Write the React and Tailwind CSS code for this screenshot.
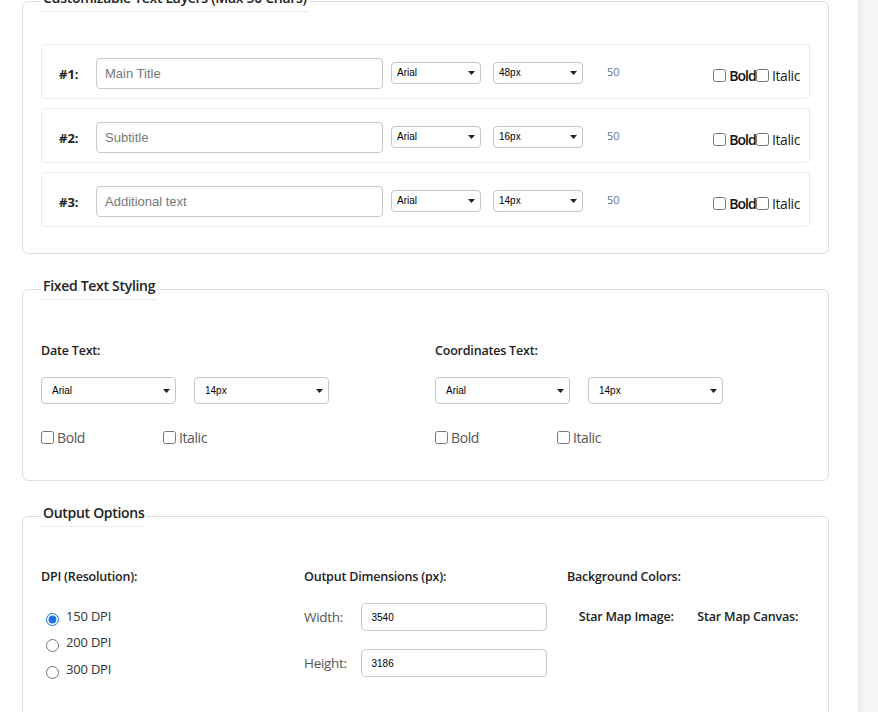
import React from "react";

const arial = "font-['Liberation_Sans',Arial,sans-serif]";

function Select({ value, w, h, pl, className = "" }) {
  return (
    <div className={`relative shrink-0 ${className}`}>
      <select
        defaultValue={value}
        className={`${w} ${h} ${pl} ${arial} appearance-none block border border-[#c6c6c6] rounded-[4px] bg-white text-[10px] text-black outline-none`}
      >
        <option>{value}</option>
      </select>
      <svg
        className="absolute right-[6px] top-1/2 -translate-y-1/2 pointer-events-none"
        width="7"
        height="4"
        viewBox="0 0 7 4"
      >
        <path d="M0 0H7L3.5 4Z" fill="#222" />
      </svg>
    </div>
  );
}

function Check({ label, labelClass = "", boxClass = "" }) {
  return (
    <label className="flex items-center shrink-0">
      <input type="checkbox" className={`w-[13px] h-[13px] m-0 ${boxClass}`} />
      <span className={`ml-[3px] ${labelClass}`}>{label}</span>
    </label>
  );
}

function Fieldset({ title, children, className = "" }) {
  return (
    <fieldset
      className={`ml-[22px] w-[807px] border border-[#dddddd] rounded-[6px] px-[18px] ${className}`}
    >
      <legend className="px-[2px] pb-[5px] border-b border-[#ececec] text-[14px] font-semibold leading-[16px] text-[#222] tracking-[-0.3px]">
        {title}
      </legend>
      {children}
    </fieldset>
  );
}

function LayerRow({ n, placeholder, size }) {
  return (
    <div className="flex items-center h-[55px] border border-[#ececec] rounded-[4px] pl-[17px] pr-[9px]">
      <div className="w-[37px] shrink-0 mt-[7px] text-[13px] font-bold text-[#222]">#{n}:</div>
      <input
        placeholder={placeholder}
        className={`${arial} mt-[3px] shrink-0 w-[287px] h-[31px] border border-[#c9c9c9] rounded-[4px] px-[8px] text-[13px] text-[#222] placeholder:text-[#777] outline-none`}
      />
      <Select value="Arial" w="w-[90px]" h="h-[22px]" pl="pl-[5px]" className="ml-[8px] mt-[2px]" />
      <Select value={size} w="w-[90px]" h="h-[22px]" pl="pl-[5px]" className="ml-[12px] mt-[2px]" />
      <div className="ml-[24px] mt-[1px] text-[11px] text-[#62779a]">50</div>
      <div className="ml-auto mt-[7px] flex items-center text-[14px] tracking-[-0.4px]">
        <Check label="Bold" labelClass="font-semibold tracking-[-0.9px] text-[#111]" />
        <Check label="Italic" labelClass="text-[#222] ml-[3px]" />
      </div>
    </div>
  );
}

function FixedCol({ title }) {
  return (
    <div className="flex flex-col">
      <div className="text-[12.5px] font-semibold leading-[18px] text-[#222] tracking-[-0.2px]">{title}</div>
      <div className="flex gap-[18px] mt-[17px]">
        <Select value="Arial" w="w-[135px]" h="h-[27px]" pl="pl-[10px]" />
        <Select value="14px" w="w-[135px]" h="h-[27px]" pl="pl-[10px]" />
      </div>
      <div className="flex items-center h-[20px] mt-[23px] text-[14px] text-[#555] tracking-[-0.4px]">
        <div className="w-[122px]">
          <Check label="Bold" />
        </div>
        <Check label="Italic" />
      </div>
    </div>
  );
}

function Radio({ label, checked }) {
  return (
    <label className="flex items-center h-[26.5px]">
      <input
        type="radio"
        name="dpi"
        defaultChecked={checked}
        className="w-[13px] h-[13px] m-0 ml-[5px] mt-[6px] accent-[#1a73e8]"
      />
      <span className="ml-[7px] text-[13px] text-[#333] tracking-[-0.2px]">{label}</span>
    </label>
  );
}

function DimRow({ label, value }) {
  return (
    <div className="flex items-center">
      <div className="w-[58px] text-[13.5px] text-[#555] tracking-[-0.3px]">{label}</div>
      <input
        defaultValue={value}
        className={`${arial} w-[187px] h-[28px] border border-[#c9c9c9] rounded-[4px] px-[9px] text-[10px] text-black outline-none`}
      />
    </div>
  );
}

const head = "text-[12.5px] font-semibold leading-[18px] text-[#222] tracking-[-0.2px]";

export default function App() {
  return (
    <div className="h-[712px] overflow-hidden bg-white flex font-['Open_Sans',sans-serif] text-[#333]">
      <div className="w-[858px] shrink-0">
        <div className="-mt-[10px]">
          <Fieldset title="Customizable Text Layers (Max 50 Chars)" className="pb-[26px] mb-[24px]">
            <div className="pt-[32px] flex flex-col gap-[9px]">
              <LayerRow n={1} placeholder="Main Title" size="48px" />
              <LayerRow n={2} placeholder="Subtitle" size="16px" />
              <LayerRow n={3} placeholder="Additional text" size="14px" />
            </div>
          </Fieldset>

          <Fieldset title="Fixed Text Styling" className="pb-[33px] mb-[24px]">
            <div className="grid grid-cols-2 gap-[19px] pt-[42px]">
              <FixedCol title="Date Text:" />
              <FixedCol title="Coordinates Text:" />
            </div>
          </Fieldset>

          <Fieldset title="Output Options" className="pb-[40px]">
            <div className="grid grid-cols-3 gap-5 pt-[41px]">
              <div className="flex flex-col">
                <div className={head}>DPI (Resolution):</div>
                <div className="mt-[17px] flex flex-col">
                  <Radio label="150 DPI" checked />
                  <Radio label="200 DPI" />
                  <Radio label="300 DPI" />
                </div>
              </div>
              <div className="flex flex-col">
                <div className={head}>Output Dimensions (px):</div>
                <div className="mt-[17px] flex flex-col gap-[18px]">
                  <DimRow label="Width:" value="3540" />
                  <DimRow label="Height:" value="3186" />
                </div>
              </div>
              <div className="flex flex-col">
                <div className={head}>Background Colors:</div>
                <div className={`mt-[22px] flex justify-around ${head}`}>
                  <div>Star Map Image:</div>
                  <div>Star Map Canvas:</div>
                </div>
              </div>
            </div>
          </Fieldset>
        </div>
      </div>
      <div className="flex-1 bg-[linear-gradient(to_right,#ebebef,#f4f4f7_5px,#f5f5f8)]" />
    </div>
  );
}
